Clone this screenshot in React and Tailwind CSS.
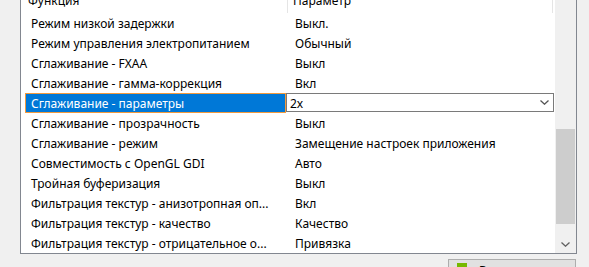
const rows = [
  ["Режим низкой задержки", "Выкл."],
  ["Режим управления электропитанием", "Обычный"],
  ["Сглаживание - FXAA", "Выкл"],
  ["Сглаживание - гамма-коррекция", "Вкл"],
  ["Сглаживание - параметры", "2x", true],
  ["Сглаживание - прозрачность", "Выкл"],
  ["Сглаживание - режим", "Замещение настроек приложения"],
  ["Совместимость с OpenGL GDI", "Авто"],
  ["Тройная буферизация", "Выкл"],
  ["Фильтрация текстур - анизотропная оп...", "Вкл"],
  ["Фильтрация текстур - качество", "Качество"],
  ["Фильтрация текстур - отрицательное о...", "Привязка"],
];

const Chevron = ({ up, className }) => (
  <svg width="9" height="5" viewBox="0 0 9 5" className={className}>
    <path
      d={up ? "M0.5 4.5 L4.5 0.8 L8.5 4.5" : "M0.5 0.5 L4.5 4.2 L8.5 0.5"}
      fill="none"
      stroke="currentColor"
      strokeWidth="1.3"
    />
  </svg>
);

const Row = ({ name, value, selected }) => {
  if (selected) {
    return (
      <div className="flex h-[20px] pl-[4px]">
        <div className="w-[261px] h-[20px] bg-[#0078d7] border border-[#f29a3d] text-white pl-[5px] pt-[1px] leading-[18px] whitespace-nowrap overflow-hidden">
          {name}
        </div>
        <div className="w-[268px] h-[19px] bg-white border border-[#7a7a7a] pl-[3px] pr-[4px] flex items-center justify-between leading-[17px]">
          <span className="pt-[1px]">{value}</span>
          <Chevron className="text-[#555]" />
        </div>
      </div>
    );
  }
  return (
    <div className="flex h-[20px] pl-[4px] leading-[20px] pt-[1px]">
      <div className="w-[261px] pl-[6px] whitespace-nowrap">{name}</div>
      <div className="pl-[9px] whitespace-nowrap">{value}</div>
    </div>
  );
};

export default function App() {
  return (
    <div
      className="w-[589px] h-[267px] overflow-hidden bg-[#f0f0f0] text-[12px] text-black leading-none"
      style={{ fontFamily: '"Noto Sans", sans-serif' }}
    >
      <div className="ml-[20px] mt-[-12px] w-[557px] border border-[#828790] bg-white flex">
        <div className="w-[534px] flex flex-col">
          <div className="h-[24px] flex items-center">
            <div className="w-[267px] h-full pl-[7px] flex items-center border-r border-[#e5e5e5]">Функция</div>
            <div className="w-[265px] h-full pl-[5px] flex items-center border-r border-[#e5e5e5]">Параметр</div>
          </div>
          {rows.map(([n, v, s]) => (
            <Row key={n} name={n} value={v} selected={s} />
          ))}
        </div>
        <div className="w-[21px] bg-[#f0f0f0] flex flex-col">
          <div className="h-[17px] flex items-center justify-center text-[#606060]">
            <Chevron up />
          </div>
          <div className="h-[123px]" />
          <div className="h-[95px] mx-[1px] bg-[#cdcdcd]" />
          <div className="flex-1" />
          <div className="h-[17px] flex items-center justify-center text-[#606060]">
            <Chevron />
          </div>
        </div>
      </div>
      <div className="flex justify-end pr-[13px] mt-[5px]">
        <div className="w-[128px] h-[24px] bg-[#e1e1e1] border border-[#adadad] flex items-start pt-[3px] pl-[8px] gap-[12px]">
          <div className="w-[10px] h-[10px] bg-[#76b900]" />
          <span className="mt-[2px]">Восстановить</span>
        </div>
      </div>
    </div>
  );
}
